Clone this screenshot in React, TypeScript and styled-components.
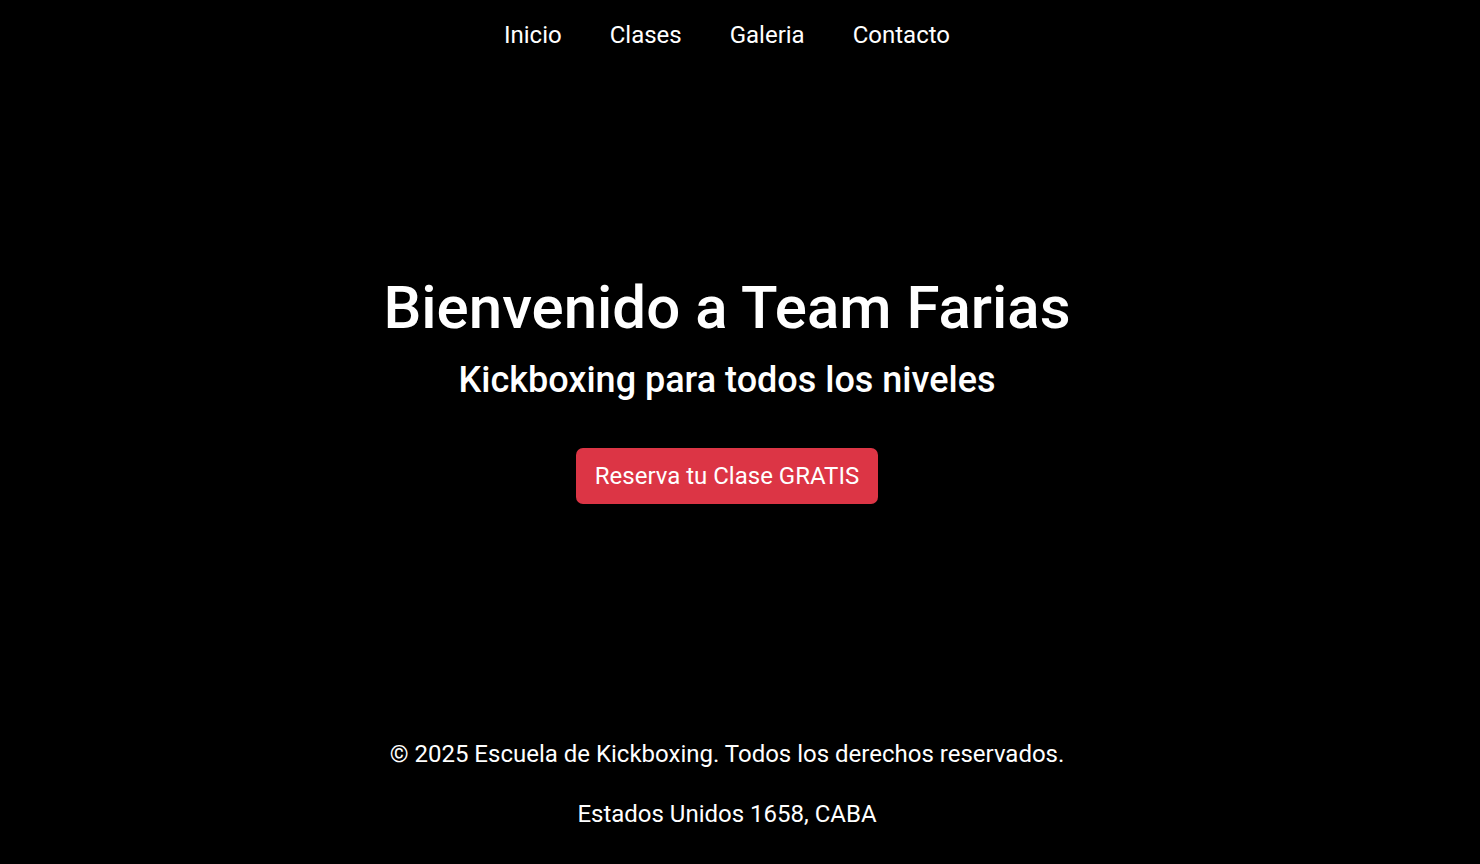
import styled, { createGlobalStyle } from "styled-components";

const GlobalStyle = createGlobalStyle`
  html, body {
    margin: 0;
    padding: 0;
    background: #000;
    color: #fff;
    font-family: Roboto, "Liberation Sans", sans-serif;
  }
`;

const Page = styled.div`
  min-height: 864px;
  padding-right: 26px;
  display: flex;
  flex-direction: column;
  align-items: center;
`;

const Nav = styled.nav`
  display: flex;
  gap: 48px;
  padding-top: 20px;
`;

const NavLink = styled.a`
  color: #fff;
  text-decoration: none;
  font-size: 24px;
  line-height: 30px;
`;

const Hero = styled.section`
  display: flex;
  flex-direction: column;
  align-items: center;
  padding-top: 222px;
`;

const Title = styled.h1`
  margin: 0;
  font-size: 60px;
  font-weight: 500;
  line-height: 72px;
`;

const Subtitle = styled.h2`
  margin: 14px 0 0;
  font-size: 36px;
  font-weight: 500;
  line-height: 44px;
`;

const Cta = styled.a`
  margin-top: 46px;
  padding: 0 19px;
  height: 56px;
  display: flex;
  align-items: center;
  background: #dc3545;
  border-radius: 7px;
  color: #fff;
  text-decoration: none;
  font-size: 24px;
`;

const Footer = styled.footer`
  margin-top: 235px;
  display: flex;
  flex-direction: column;
  align-items: center;
  gap: 30px;
`;

const FooterLine = styled.p`
  margin: 0;
  font-size: 24px;
  line-height: 30px;
`;

export default function App() {
  return (
    <>
      <GlobalStyle />
      <Page>
        <Nav>
          <NavLink href="#">Inicio</NavLink>
          <NavLink href="#">Clases</NavLink>
          <NavLink href="#">Galeria</NavLink>
          <NavLink href="#">Contacto</NavLink>
        </Nav>
        <Hero>
          <Title>Bienvenido a Team Farias</Title>
          <Subtitle>Kickboxing para todos los niveles</Subtitle>
          <Cta href="#">Reserva tu Clase GRATIS</Cta>
        </Hero>
        <Footer>
          <FooterLine>© 2025 Escuela de Kickboxing. Todos los derechos reservados.</FooterLine>
          <FooterLine>Estados Unidos 1658, CABA</FooterLine>
        </Footer>
      </Page>
    </>
  );
}
